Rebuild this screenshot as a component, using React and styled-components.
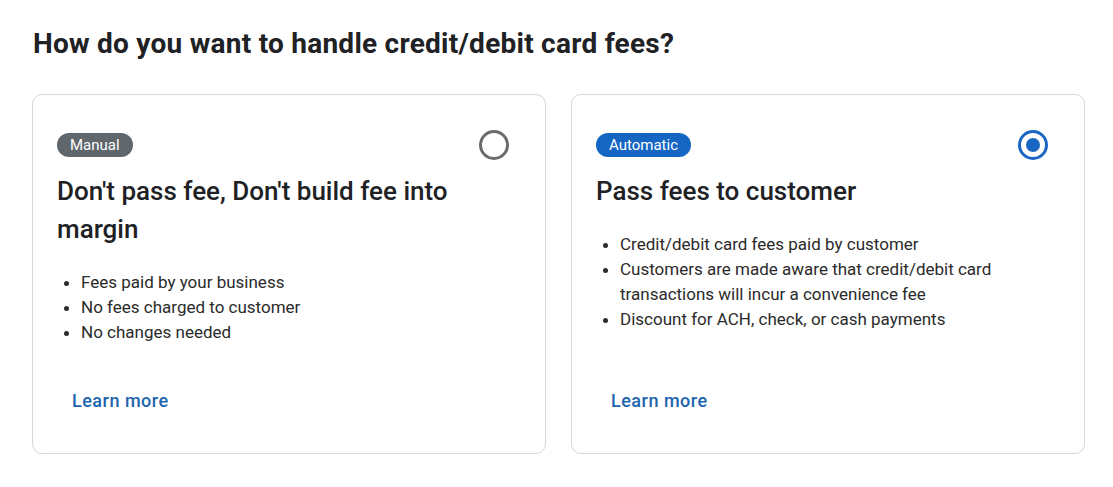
import styled, { createGlobalStyle } from "styled-components";

const GlobalStyle = createGlobalStyle`
  body {
    margin: 0;
    background: #ffffff;
    font-family: Roboto, "Liberation Sans", Arial, sans-serif;
  }
`;

const Page = styled.div`
  padding: 28px 28px 32px 32px;
`;

const Heading = styled.h2`
  margin: 0 0 34px 1px;
  font-size: 28px;
  line-height: 32px;
  font-weight: 700;
  letter-spacing: 0.25px;
  color: #202124;
`;

const Options = styled.div`
  display: grid;
  grid-template-columns: 1fr 1fr;
  gap: 25px;
`;

const Card = styled.div`
  display: flex;
  flex-direction: column;
  border: 1px solid #d6d6d6;
  border-radius: 10px;
  padding: 35px 36px 32px 24px;
  background: #fff;
`;

const CardHeader = styled.div`
  display: flex;
  align-items: center;
  justify-content: space-between;
  height: 30px;
`;

const Badge = styled.span`
  display: inline-block;
  height: 24px;
  line-height: 24px;
  padding: 0 13px;
  border-radius: 12px;
  font-size: 15px;
  color: #fff;
  background: ${(p) => (p.$tone === "blue" ? "#1565c3" : "#5f666c")};
`;

const Radio = styled.span`
  box-sizing: border-box;
  width: 30px;
  height: 30px;
  border-radius: 50%;
  border: 3px solid ${(p) => (p.$checked ? "#1a66c2" : "#6b6b6b")};
  display: flex;
  align-items: center;
  justify-content: center;

  &::after {
    content: "";
    width: 14px;
    height: 14px;
    border-radius: 50%;
    background: #1a66c2;
    display: ${(p) => (p.$checked ? "block" : "none")};
  }
`;

const CardTitle = styled.h3`
  margin: 12px 0 0;
  font-size: 26px;
  line-height: 38px;
  font-weight: 500;
  color: #202124;
`;

const Points = styled.ul`
  margin: 22px 0 36px;
  padding-left: 24px;
  font-size: 17px;
  line-height: 25px;
  color: #2b2b2b;
`;

const LearnMore = styled.a`
  margin-top: auto;
  align-self: flex-start;
  padding: 8px 15px;
  font-size: 18px;
  line-height: 24px;
  font-weight: 500;
  letter-spacing: 0.5px;
  color: #1d65ae;
  text-decoration: none;
  cursor: pointer;
`;

const options = [
  {
    badge: "Manual",
    tone: "gray",
    title: "Don't pass fee, Don't build fee into margin",
    points: [
      "Fees paid by your business",
      "No fees charged to customer",
      "No changes needed",
    ],
    checked: false,
  },
  {
    badge: "Automatic",
    tone: "blue",
    title: "Pass fees to customer",
    points: [
      "Credit/debit card fees paid by customer",
      "Customers are made aware that credit/debit card transactions will incur a convenience fee",
      "Discount for ACH, check, or cash payments",
    ],
    checked: true,
  },
];

const App = () => {
  return (
    <Page>
      <GlobalStyle />
      <Heading>How do you want to handle credit/debit card fees?</Heading>
      <Options>
        {options.map((opt) => (
          <Card key={opt.badge}>
            <CardHeader>
              <Badge $tone={opt.tone}>{opt.badge}</Badge>
              <Radio $checked={opt.checked} />
            </CardHeader>
            <CardTitle>{opt.title}</CardTitle>
            <Points>
              {opt.points.map((pt) => (
                <li key={pt}>{pt}</li>
              ))}
            </Points>
            <LearnMore>Learn more</LearnMore>
          </Card>
        ))}
      </Options>
    </Page>
  );
};

export default App;
